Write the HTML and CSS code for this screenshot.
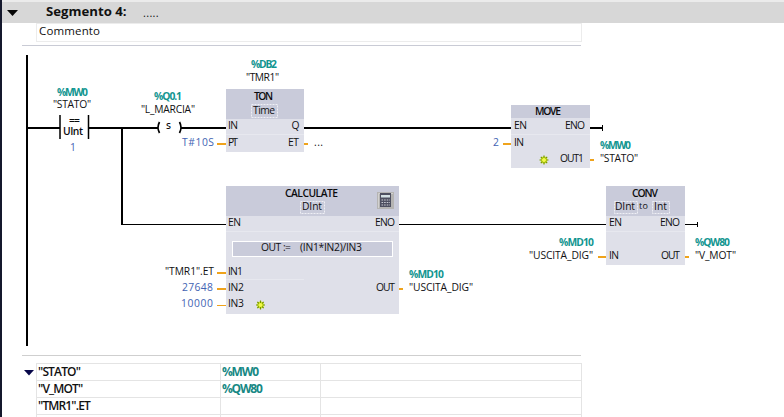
FILE: index.html
```html
<!DOCTYPE html>
<html lang="it">
<head>
<meta charset="utf-8">
<title>Segmento 4</title>
<link rel="stylesheet" href="styles.css">
</head>
<body>
<main class="editor">
  <header class="segment-bar">
    <svg class="toggle" width="11" height="6" viewBox="0 0 11 6"><path d="M0 0H11L5.5 6Z" fill="#050505"/></svg>
    <h1 class="segment-title">Segmento 4:</h1>
    <span class="segment-name">.....</span>
  </header>
  <div class="comment">Commento</div>
  <svg class="ladder" viewBox="22 46 559 309">
    <defs>
      <g id="spark">
        <circle r="3.4" fill="#dcec30"/>
        <path d="M0-4.5V-2M0 2V4.5M-4.5 0H-2M2 0H4.5M-3.2-3.2L-1.5-1.5M3.2 3.2L1.5 1.5M-3.2 3.2L-1.5 1.5M3.2-3.2L1.5-1.5" stroke="#749600" stroke-width="1.2"/>
        <circle r="1.7" fill="#f3f94a"/>
      </g>
    </defs>

    <!-- Blocks -->
    <g class="body">
      <path d="M226 89h78v63h-78zM511 105h79v63h-79zM226 186h173v128h-173zM606 186h79v79h-79z"/>
    </g>
    <g class="head">
      <path d="M226 89h78v30h-78zM511 105h79v13h-79zM226 186h173v30h-173zM606 186h79v30h-79z"/>
    </g>
    <path class="seam" d="M226 134.500h78M511 134.500h79M226 231.500h173M226 279.500h78M606 231.500h79"/>
    <g class="slot">
      <rect x="251.500" y="104.500" width="26" height="13"/>
      <rect x="300.500" y="201.500" width="24" height="12"/>
      <rect x="614.500" y="201.500" width="23" height="12"/>
      <rect x="652.500" y="201.500" width="17" height="12"/>
    </g>
    <rect class="formula" x="232.500" y="241.500" width="160" height="15"/>

    <!-- Power rail and wires -->
    <path class="wire" d="M27 55V346M28 128H60M89 128H158M181 128H226M304 128H511M590 128H602M122 128V225"/>
    <path class="thin" d="M121 224.500H226M399 224.500H606M685 224.500H697.500M697.500 222V227M602.500 125V131"/>
    <path class="contact" d="M60 115V139M88.500 115V139"/>
    <path class="coil" d="M159.500 122Q156.500 127.500 159.500 133M179.500 122Q182.500 127.500 179.500 133"/>
    <path class="pin" d="M217 144H226M304 144H308M503 144H511M590 160H594M217 273H226M217 289H226M399 289H403M598 257H606M685 257H689"/>
    <path class="pin pin-thin" d="M217 305.500H226"/>
    <use href="#spark" x="544" y="160"/>
    <use href="#spark" x="260.500" y="305"/>

    <!-- Calculator -->
    <g>
      <rect x="377" y="192" width="17" height="17" fill="#b5b4b3"/>
      <path d="M378.500 208V193.500H393" fill="none" stroke="#d2d1d0"/>
      <rect x="380" y="193" width="11" height="14" fill="#4d4f60"/>
      <rect x="381" y="195" width="9" height="2.500" fill="#d3e0e4"/>
      <path d="M381.500 200H390M381.500 202.500H390M381.500 205H390" stroke="#c9cad2" stroke-width="1.200" stroke-dasharray="1.600 1"/>
    </g>

    <!-- Contact and coil -->
    <text class="tag" x="57" y="96" textLength="31">%MW0</text>
    <text x="53" y="108" textLength="38">"STATO"</text>
    <text class="strong" x="69" y="124" textLength="11">==</text>
    <text class="strong" x="63" y="135" textLength="20">UInt</text>
    <text class="value" x="70" y="151">1</text>
    <text class="tag" x="154" y="100" textLength="28">%Q0.1</text>
    <text x="141" y="113" textLength="54">"L_MARCIA"</text>
    <text class="strong small" x="166" y="129">S</text>

    <!-- Timer -->
    <text class="tag" x="251" y="68" textLength="26">%DB2</text>
    <text x="246" y="81" textLength="33">"TMR1"</text>
    <text class="strong" x="254" y="100" textLength="19">TON</text>
    <text x="253" y="114" textLength="22">Time</text>
    <text x="228" y="129" textLength="10">IN</text>
    <text x="291.500" y="129">Q</text>
    <text x="228" y="146" textLength="10">PT</text>
    <text x="288" y="146" textLength="11">ET</text>
    <text class="value" x="182" y="146" textLength="32">T#10S</text>
    <text x="314" y="146" textLength="9">...</text>

    <!-- Move -->
    <text class="strong" x="535" y="115" textLength="26">MOVE</text>
    <text x="514" y="129" textLength="13">EN</text>
    <text x="565" y="129" textLength="20">ENO</text>
    <text x="514" y="146" textLength="10">IN</text>
    <text x="560" y="162" textLength="24">OUT1</text>
    <text class="value" x="493" y="146">2</text>
    <text class="tag" x="600" y="149" textLength="31">%MW0</text>
    <text x="600" y="162" textLength="38">"STATO"</text>

    <!-- Calculate -->
    <text class="strong" x="285" y="197" textLength="53">CALCULATE</text>
    <text x="302" y="210" textLength="20">DInt</text>
    <text x="228" y="226" textLength="13">EN</text>
    <text x="375" y="226" textLength="20">ENO</text>
    <text x="261" y="251" textLength="30">OUT :=</text>
    <text x="300" y="251" textLength="62">(IN1*IN2)/IN3</text>
    <text x="165" y="275" textLength="49">"TMR1".ET</text>
    <text class="value" x="182" y="291" textLength="31">27648</text>
    <text class="value" x="181" y="307" textLength="32">10000</text>
    <text x="228" y="275" textLength="15">IN1</text>
    <text x="228" y="291" textLength="16">IN2</text>
    <text x="228" y="307" textLength="16">IN3</text>
    <text x="376" y="291" textLength="19">OUT</text>
    <text class="tag" x="409" y="278" textLength="35">%MD10</text>
    <text x="409" y="291" textLength="64">"USCITA_DIG"</text>

    <!-- Convert -->
    <text class="strong" x="632" y="197" textLength="26">CONV</text>
    <text x="615" y="210" textLength="20">DInt</text>
    <text class="joiner" x="639" y="209" textLength="9">to</text>
    <text x="654" y="210" textLength="13">Int</text>
    <text x="609" y="226" textLength="13">EN</text>
    <text x="660" y="226" textLength="20">ENO</text>
    <text x="609" y="259" textLength="10">IN</text>
    <text x="661" y="259" textLength="19">OUT</text>
    <text class="tag" x="559" y="246" textLength="35">%MD10</text>
    <text x="529" y="259" textLength="64">"USCITA_DIG"</text>
    <text class="tag" x="695" y="246" textLength="35">%QW80</text>
    <text x="695" y="259" textLength="41">"V_MOT"</text>
  </svg>
  <section class="operands">
    <svg class="operands-toggle" width="10" height="6" viewBox="0 0 10 6"><path d="M0 0H10L5 5.500Z" fill="#08084a"/></svg>
    <div class="grid">
      <div class="cell">"STATO"</div><div class="cell address">%MW0</div><div class="cell"></div>
      <div class="cell">"V_MOT"</div><div class="cell address">%QW80</div><div class="cell"></div>
      <div class="cell">"TMR1".ET</div><div class="cell address"></div><div class="cell"></div>
      <div class="cell"></div><div class="cell"></div><div class="cell"></div>
    </div>
  </section>
</main>
</body>
</html>
```
FILE: styles.css
```css
* { box-sizing: border-box; }
body {
  margin: 0;
  background: #fff;
  color: #111;
  font-family: "Open Sans", "Noto Sans", sans-serif;
}
.editor {
  height: 417px;
  border-left: 2px solid #14182c;
  overflow: hidden;
}
.segment-bar {
  display: flex;
  align-items: center;
  height: 23px;
  padding-left: 5px;
  border-top: 2px solid #ebebeb;
  background: #d7d7d7;
}
.toggle { display: block; }
.segment-title {
  margin: -3px 0 0 28px;
  width: 97px;
  font-size: 13.2px;
  line-height: 20px;
  font-weight: 700;
  white-space: nowrap;
}
.segment-name { font-size: 11px; letter-spacing: 0.3px; line-height: 20px; }
.comment {
  width: 546px;
  height: 19px;
  margin: 0 0 3px 34px;
  padding-left: 2px;
  border: 1px solid #ececec;
  font-size: 11.500px;
  line-height: 14px;
  letter-spacing: 0.15px;
}
.ladder {
  display: block;
  width: 559px;
  height: 311px;
  margin-left: 20px;
  border-top: 1px solid #c9cbd5;
  border-bottom: 1px solid #cfcfcf;
  overflow: visible;
}
.ladder text { font-size: 10.300px; fill: #111113; }
.ladder .tag { fill: #119590; font-weight: 700; }
.ladder .value { fill: #4263b3; }
.ladder .strong { font-weight: 600; fill: #0b0b0d; }
.ladder .small { font-size: 9px; }
.ladder .joiner { font-size: 9px; }
.body { fill: #dfe0e9; }
.head { fill: #c9cbda; }
.seam { stroke: #e7e8ef; }
.slot { fill: none; stroke: #eeeff5; stroke-dasharray: 2 1; }
.formula { fill: #c9cbda; stroke: #fff; }
.wire, .thin, .contact, .coil, .pin { fill: none; stroke: #000; }
.wire { stroke-width: 2; }
.thin { stroke-width: 1; }
.contact { stroke-width: 1.5; }
.coil { stroke-width: 1.7; }
.pin { stroke: #efa31c; stroke-width: 2; }
.pin-thin { stroke-width: 1; }
.operands { display: flex; margin-top: 7px; }
.operands-toggle { margin: 7px 2px 0 22px; }
.grid {
  display: grid;
  grid-template-columns: 184px 100px 261px;
  grid-auto-rows: 17px;
  border-top: 1px solid #e4e4e4;
  border-left: 1px solid #e4e4e4;
}
.cell {
  border-right: 1px solid #e4e4e4;
  border-bottom: 1px solid #e4e4e4;
  padding-left: 1px;
  font-size: 12px;
  line-height: 16px;
  font-weight: 600;
  letter-spacing: -0.85px;
  white-space: nowrap;
}
.address { color: #178884; font-weight: 700; letter-spacing: -1.2px; }
```
